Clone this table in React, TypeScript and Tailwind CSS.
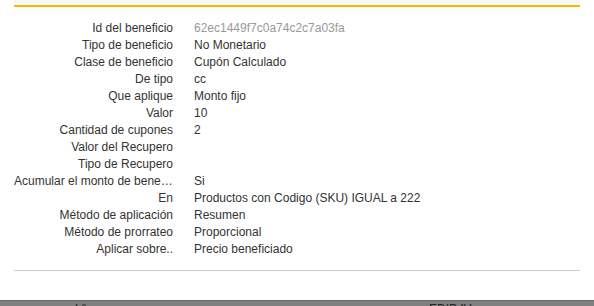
const ROWS: { label: string; value: string; muted?: boolean }[] = [
  { label: 'Id del beneficio', value: '62ec1449f7c0a74c2c7a03fa', muted: true },
  { label: 'Tipo de beneficio', value: 'No Monetario' },
  { label: 'Clase de beneficio', value: 'Cupón Calculado' },
  { label: 'De tipo', value: 'cc' },
  { label: 'Que aplique', value: 'Monto fijo' },
  { label: 'Valor', value: '10' },
  { label: 'Cantidad de cupones', value: '2' },
  { label: 'Valor del Recupero', value: '' },
  { label: 'Tipo de Recupero', value: '' },
  { label: 'Acumular el monto de beneficio', value: 'Si' },
  { label: 'En', value: 'Productos con Codigo (SKU) IGUAL a 222' },
  { label: 'Método de aplicación', value: 'Resumen' },
  { label: 'Método de prorrateo', value: 'Proporcional' },
  { label: 'Aplicar sobre..', value: 'Precio beneficiado' },
];

export default function App() {
  return (
    <div className="w-[594px] h-[306px] overflow-hidden bg-white text-[12px] text-[#333] font-['Liberation_Sans',Arial,sans-serif]">
      <div className="px-[14px]">
        {/* header strip */}
        <div className="h-[7px] bg-[#f8f8f8] border-b-2 border-[#ffb400]" />

        {/* details */}
        <div className="pt-[13px] pb-[12px]">
          {ROWS.map((r) => (
            <div key={r.label} className="grid grid-cols-[159px_1fr] gap-x-[21px] leading-[17px]">
              <span className="text-right truncate">{r.label}</span>
              <span className={r.muted ? 'text-[#999]' : ''}>{r.value || '\u00a0'}</span>
            </div>
          ))}
        </div>

        <div className="border-t border-[#ccc]" />
      </div>

      {/* footer bar */}
      <div className="mt-[29px] h-[20px] bg-[#808080] border-t border-[#666] flex text-[#222] leading-[14px]">
        <span className="ml-[75px] pt-[1px]">Lº</span>
        <span className="ml-[343px] pt-[1px]">EDIP IV</span>
      </div>
    </div>
  );
}
